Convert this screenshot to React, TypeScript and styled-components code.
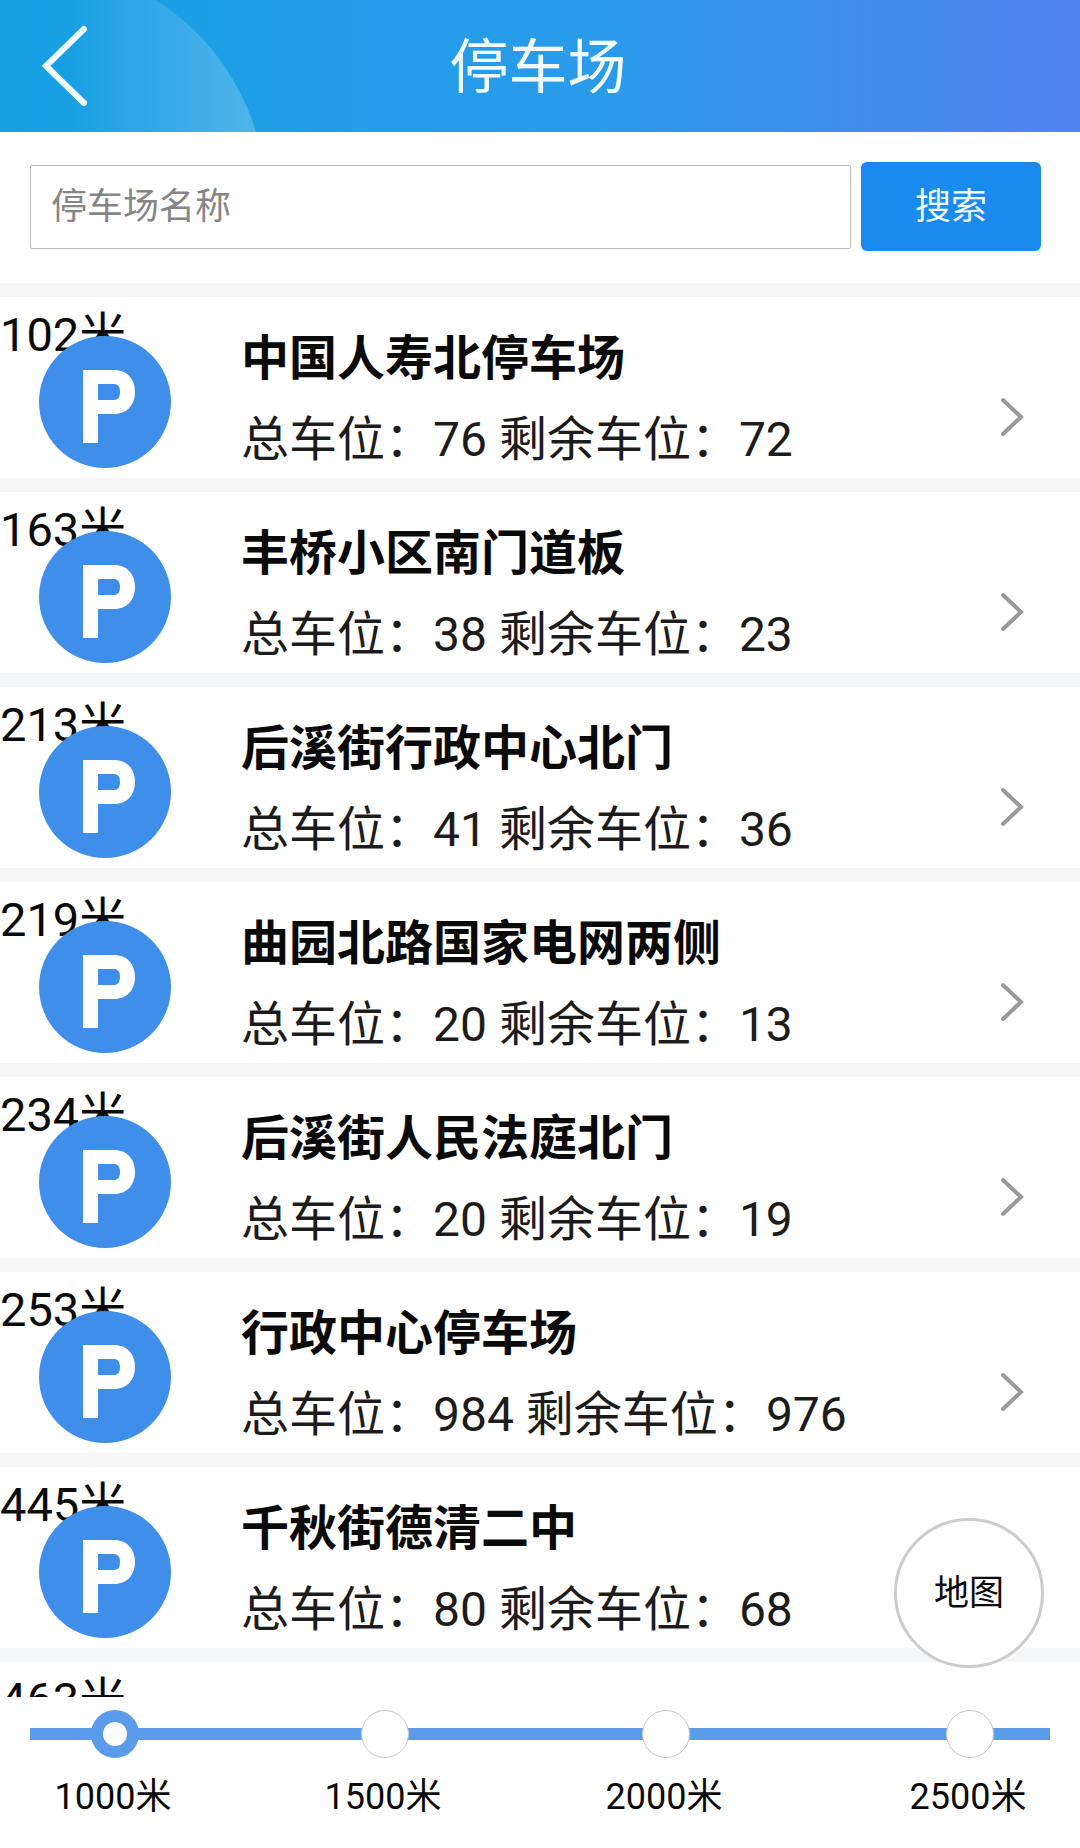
import { createGlobalStyle, styled } from "styled-components";

const GlobalStyle = createGlobalStyle`
  html, body {
    margin: 0;
    padding: 0;
    background: #ffffff;
  }
  * {
    box-sizing: border-box;
  }
`;

const Page = styled.div`
  position: relative;
  display: flex;
  flex-direction: column;
  width: 1080px;
  height: 1848px;
  overflow: hidden;
  background: #ffffff;
  color: #0a0a0a;
  font-family: Roboto, "Noto Sans CJK SC", sans-serif;
`;

const Header = styled.header`
  position: relative;
  display: flex;
  align-items: center;
  justify-content: center;
  flex: none;
  height: 132px;
  overflow: hidden;
  background: linear-gradient(90deg, #15a0e2 0%, #2a9bea 55%, #4589ee 85%, #5282f0 100%);

  &::before {
    content: "";
    position: absolute;
    left: -206px;
    top: -36px;
    width: 472px;
    height: 472px;
    border-radius: 50%;
    background: linear-gradient(90deg, rgba(255, 255, 255, 0) 58%, rgba(255, 255, 255, 0.24) 100%);
  }
`;

const BackButton = styled.button`
  position: absolute;
  left: 40px;
  top: 24px;
  width: 50px;
  height: 84px;
  padding: 0;
  border: 0;
  background: none;
`;

const HeaderTitle = styled.h1`
  position: relative;
  margin: 2px 0 0 -4px;
  color: #f2fbff;
  font-size: 59px;
  font-weight: 400;
  line-height: 1;
`;

const SearchBar = styled.form`
  display: flex;
  flex: none;
  align-items: center;
  gap: 10px;
  height: 151px;
  padding: 0 39px 2px 30px;
`;

const SearchInput = styled.input`
  flex: 1;
  height: 84px;
  padding: 0 20px;
  border: 1px solid #b9b9b9;
  border-radius: 2px;
  background: #ffffff;
  font-family: inherit;
  font-size: 36px;

  &::placeholder {
    color: #858585;
    opacity: 1;
  }
`;

const SearchButton = styled.button`
  width: 180px;
  height: 89px;
  padding: 0 0 8px;
  border: 0;
  border-radius: 6px;
  background: #1a8aee;
  color: #eefaff;
  font-family: inherit;
  font-size: 36px;
`;

const List = styled.ul`
  flex: none;
  height: 1414px;
  margin: 0;
  padding: 0;
  overflow: hidden;
  list-style: none;
`;

const Row = styled.li`
  display: flex;
  height: 195px;
  border-top: 14px solid #f5f6f7;
  background: #ffffff;
`;

const Marker = styled.div`
  display: flex;
  flex: none;
  flex-direction: column;
  width: 241px;
  padding-top: 16px;
`;

const Distance = styled.span`
  font-size: 47px;
  line-height: 44px;
  white-space: nowrap;
`;

const ParkingIcon = styled.div`
  display: flex;
  align-items: center;
  justify-content: center;
  position: relative;
  width: 132px;
  height: 132px;
  margin: -21px 0 0 39px;
  padding: 8px 0 0 8px;
  border-radius: 50%;
  background: #3f8ee9;
`;

const Info = styled.div`
  display: flex;
  flex: 1;
  flex-direction: column;
  gap: 17px;
  padding-top: 30px;
`;

const Name = styled.div`
  font-size: 48px;
  font-weight: 700;
  line-height: 64px;
`;

const Stats = styled.div`
  color: #1c1c1c;
  font-size: 48px;
  line-height: 64px;
  white-space: nowrap;
`;

const Arrow = styled.div`
  flex: none;
  width: 59px;
  margin-right: 22px;
  padding-top: 100px;
`;

const Slider = styled.div`
  position: relative;
  display: flex;
  flex: none;
  padding: 13px 0 0 55px;

  &::before {
    content: "";
    position: absolute;
    left: 30px;
    right: 30px;
    top: 31px;
    height: 12px;
    background: #5a9bea;
  }
`;

const Stop = styled.div<{ $gap: number }>`
  position: relative;
  display: flex;
  flex-direction: column;
  align-items: center;
  gap: 17px;
  width: 120px;
  margin-left: ${({ $gap }) => $gap}px;
`;

const Thumb = styled.div<{ $active: boolean }>`
  width: 48px;
  height: 48px;
  border-radius: 50%;
  background: #ffffff;
  border: ${({ $active }) => ($active ? "12px solid #5a9bea" : "1px solid #c9c9c9")};
`;

const StopLabel = styled.span`
  margin-right: 4px;
  font-size: 36px;
  line-height: 44px;
  white-space: nowrap;
`;

const MapButton = styled.button`
  position: absolute;
  right: 36px;
  bottom: 180px;
  width: 150px;
  height: 150px;
  padding: 0 0 8px;
  border: 3px solid #cccccc;
  border-radius: 50%;
  background: #ffffff;
  color: #0a0a0a;
  font-family: inherit;
  font-size: 35px;
`;

const lots = [
  { distance: "102米", name: "中国人寿北停车场", total: 76, free: 72 },
  { distance: "163米", name: "丰桥小区南门道板", total: 38, free: 23 },
  { distance: "213米", name: "后溪街行政中心北门", total: 41, free: 36 },
  { distance: "219米", name: "曲园北路国家电网两侧", total: 20, free: 13 },
  { distance: "234米", name: "后溪街人民法庭北门", total: 20, free: 19 },
  { distance: "253米", name: "行政中心停车场", total: 984, free: 976 },
  { distance: "445米", name: "千秋街德清二中", total: 80, free: 68 },
];

const stops = [
  { label: "1000米", gap: 0, active: true },
  { label: "1500米", gap: 150, active: false },
  { label: "2000米", gap: 161, active: false },
  { label: "2500米", gap: 184, active: false },
];

const BackIcon = () => (
  <svg width="50" height="84" viewBox="0 0 50 84" fill="none">
    <path d="M44 5 L6 42 L44 79" stroke="#eefbff" strokeWidth="6" strokeLinecap="round" strokeLinejoin="miter" />
  </svg>
);

const PIcon = () => (
  <svg width="52" height="73" viewBox="0 0 52 73">
    <path
      fill="#ffffff"
      fillRule="evenodd"
      d="M0 0 H31 C44 0 52 9 52 22 C52 35 44 44 31 44 H15 V73 H0 Z M15 14 V30 H31 C35 30 37 27 37 22 C37 17 35 14 31 14 Z"
    />
  </svg>
);

const ChevronIcon = () => (
  <svg width="26" height="40" viewBox="0 0 26 40" fill="none">
    <path d="M4 3 L22 20 L4 37" stroke="#999999" strokeWidth="4" strokeLinecap="round" />
  </svg>
);

const Marked = ({ distance }: { distance: string }) => (
  <Marker>
    <Distance>{distance}</Distance>
    <ParkingIcon>
      <PIcon />
    </ParkingIcon>
  </Marker>
);

const App = () => {
  return (
    <Page>
      <GlobalStyle />
      <Header>
        <BackButton type="button" aria-label="返回">
          <BackIcon />
        </BackButton>
        <HeaderTitle>停车场</HeaderTitle>
      </Header>
      <SearchBar>
        <SearchInput placeholder="停车场名称" />
        <SearchButton type="button">搜索</SearchButton>
      </SearchBar>
      <List>
        {lots.map((lot) => (
          <Row key={lot.distance}>
            <Marked distance={lot.distance} />
            <Info>
              <Name>{lot.name}</Name>
              <Stats>
                总车位：{lot.total} 剩余车位：{lot.free}
              </Stats>
            </Info>
            <Arrow>
              <ChevronIcon />
            </Arrow>
          </Row>
        ))}
        <Row>
          <Marked distance="463米" />
        </Row>
      </List>
      <Slider>
        {stops.map((stop) => (
          <Stop key={stop.label} $gap={stop.gap}>
            <Thumb $active={stop.active} />
            <StopLabel>{stop.label}</StopLabel>
          </Stop>
        ))}
      </Slider>
      <MapButton type="button">地图</MapButton>
    </Page>
  );
};

export default App;
